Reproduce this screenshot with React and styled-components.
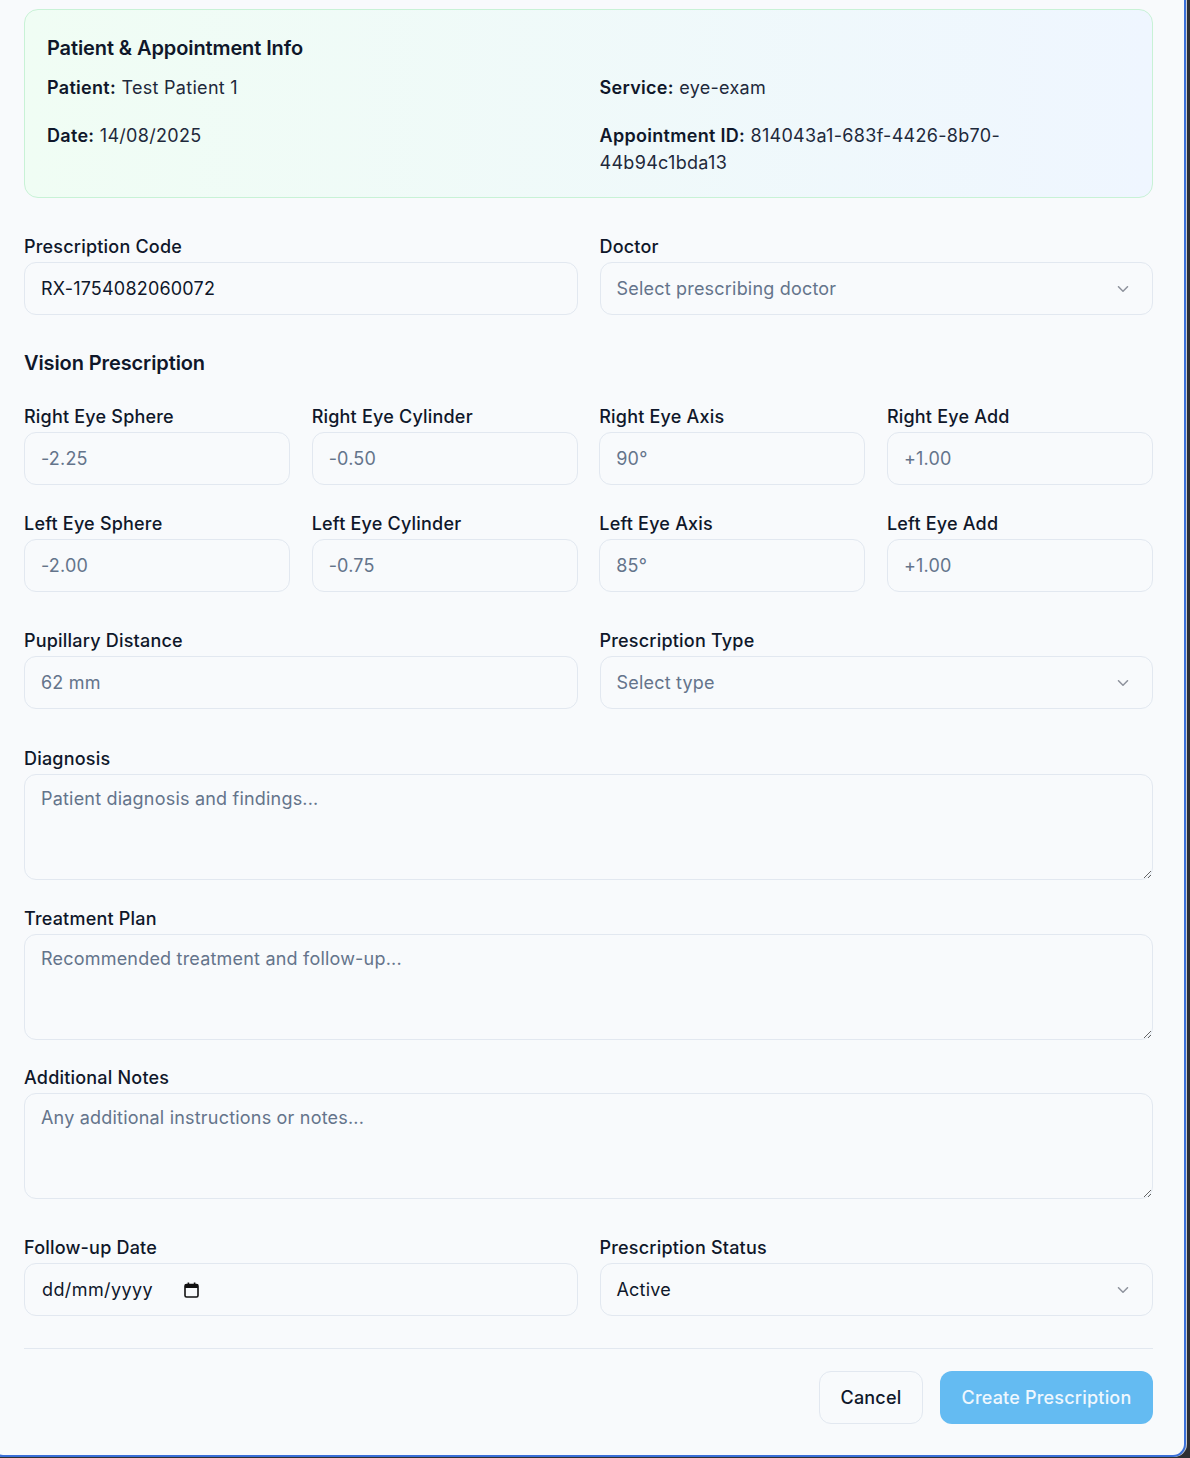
import React from 'react';
import styled, {createGlobalStyle} from 'styled-components';
import {ChevronDown} from 'lucide-react';

const GlobalStyle = createGlobalStyle`
  html, body {
    margin: 0;
    padding: 0;
    background: #2e2f33;
    overflow: hidden;
  }
  body {
    font-family: Inter, "Noto Sans", "Liberation Sans", sans-serif;
    color: #0f172a;
    letter-spacing: 0.2px;
    -webkit-font-smoothing: antialiased;
  }
  * { box-sizing: border-box; }
`

const eyeFields = [
  {label: 'Right Eye Sphere', placeholder: '-2.25'},
  {label: 'Right Eye Cylinder', placeholder: '-0.50'},
  {label: 'Right Eye Axis', placeholder: '90°'},
  {label: 'Right Eye Add', placeholder: '+1.00'},
  {label: 'Left Eye Sphere', placeholder: '-2.00'},
  {label: 'Left Eye Cylinder', placeholder: '-0.75'},
  {label: 'Left Eye Axis', placeholder: '85°'},
  {label: 'Left Eye Add', placeholder: '+1.00'},
];

const Select = ({value, placeholder}) => (
  <SelectTrigger muted={!value}>
    <span>{value || placeholder}</span>
    <ChevronDown size={18} strokeWidth={2} />
  </SelectTrigger>
);

const CalendarIcon = () => (
  <svg width="15" height="16" viewBox="0 0 15 16" aria-hidden="true">
    <rect x="1" y="2.5" width="13" height="12.5" rx="1.5" fill="none" stroke="#111" strokeWidth="1.6" />
    <rect x="1" y="2.5" width="13" height="3.5" fill="#111" />
    <rect x="3.6" y="0.5" width="1.6" height="3" fill="#111" />
    <rect x="9.8" y="0.5" width="1.6" height="3" fill="#111" />
  </svg>
);

export default function App() {
  return (
    <>
      <GlobalStyle />
      <Dialog>
        <InfoCard>
          <CardTitle>Patient &amp; Appointment Info</CardTitle>
          <InfoGrid>
            <p><b>Patient:</b> Test Patient 1</p>
            <p><b>Service:</b> eye-exam</p>
            <p><b>Date:</b> 14/08/2025</p>
            <p><b>Appointment ID:</b> 814043a1-683f-4426-8b70-44b94c1bda13</p>
          </InfoGrid>
        </InfoCard>

        <Columns gap={39}>
          <Field>
            <Label>Prescription Code</Label>
            <Input defaultValue="RX-1754082060072" />
          </Field>
          <Field>
            <Label>Doctor</Label>
            <Select placeholder="Select prescribing doctor" />
          </Field>
        </Columns>

        <SectionTitle>Vision Prescription</SectionTitle>
        <EyeGrid>
          {eyeFields.map(f => (
            <Field key={f.label}>
              <Label>{f.label}</Label>
              <Input placeholder={f.placeholder} />
            </Field>
          ))}
        </EyeGrid>

        <Columns gap={39}>
          <Field>
            <Label>Pupillary Distance</Label>
            <Input placeholder="62 mm" />
          </Field>
          <Field>
            <Label>Prescription Type</Label>
            <Select placeholder="Select type" />
          </Field>
        </Columns>

        <Field gap={40}>
          <Label>Diagnosis</Label>
          <TextArea placeholder="Patient diagnosis and findings..." />
        </Field>
        <Field gap={29}>
          <Label>Treatment Plan</Label>
          <TextArea placeholder="Recommended treatment and follow-up..." />
        </Field>
        <Field gap={28}>
          <Label>Additional Notes</Label>
          <TextArea placeholder="Any additional instructions or notes..." />
        </Field>

        <Columns gap={39}>
          <Field>
            <Label>Follow-up Date</Label>
            <DateBox>
              <span>dd/mm/yyyy</span>
              <CalendarIcon />
            </DateBox>
          </Field>
          <Field>
            <Label>Prescription Status</Label>
            <Select value="Active" />
          </Field>
        </Columns>

        <Footer>
          <CancelButton>Cancel</CancelButton>
          <SubmitButton disabled>Create Prescription</SubmitButton>
        </Footer>
      </Dialog>
    </>
  );
}

const Dialog = styled.div`
  margin-left: -10px;
  width: 1196px;
  padding: 9px 31px 31px 32px;
  background: #f8fafc;
  border: 2px solid #3a6fd8;
  border-top: none;
  border-radius: 0 0 13px 13px;
  box-shadow: 1px 0 0 #c9ccd3;
`

const InfoCard = styled.div`
  padding: 24px 22px 21px;
  border: 1px solid #c8f2d6;
  border-radius: 14px;
  background: linear-gradient(to right, #f0fdf4, #eff6ff);
`

const CardTitle = styled.h3`
  margin: 0 0 12px;
  font-size: 20px;
  line-height: 28px;
  font-weight: 600;
  letter-spacing: -0.1px;
  color: #0f172a;
`

const InfoGrid = styled.div`
  display: grid;
  grid-template-columns: 1fr 1fr;
  column-gap: 22px;
  row-gap: 21px;
  font-size: 18px;
  line-height: 27px;
  letter-spacing: 0.3px;
  color: #1e293b;

  p { margin: 0; max-width: 500px; }
  b { font-weight: 600; color: #0f172a; }
`

const Columns = styled.div`
  display: grid;
  grid-template-columns: 1fr 1fr;
  column-gap: 22px;
  margin-top: ${p => p.gap}px;
`

const EyeGrid = styled.div`
  display: grid;
  grid-template-columns: repeat(4, 1fr);
  column-gap: 21.5px;
  row-gap: 29px;
  margin-top: 30px;
`

const Field = styled.div`
  display: flex;
  flex-direction: column;
  gap: 5px;
  margin-top: ${p => p.gap || 0}px;
`

const Label = styled.label`
  font-size: 18px;
  line-height: 20px;
  font-weight: 500;
  color: #0f172a;
`

const SectionTitle = styled.h3`
  margin: 34px 0 0;
  font-size: 20px;
  line-height: 28px;
  font-weight: 600;
  letter-spacing: -0.1px;
  color: #0f172a;
`

const fieldBox = `
  width: 100%;
  border: 1px solid #e2e8f0;
  border-radius: 12px;
  background: #f8fafc;
  font-family: Inter, "Noto Sans", "Liberation Sans", sans-serif;
  font-size: 18px;
  letter-spacing: 0.2px;
  color: #0f172a;
  outline: none;
`

const Input = styled.input`
  ${fieldBox}
  height: 53px;
  padding: 0 16px;

  &::placeholder { color: #64748b; }
`

const TextArea = styled.textarea`
  ${fieldBox}
  display: block;
  height: 106px;
  padding: 11px 16px;
  line-height: 26px;
  resize: vertical;

  &::placeholder { color: #64748b; }
`

const SelectTrigger = styled.div`
  ${fieldBox}
  height: 53px;
  padding: 0 20px 0 16px;
  display: flex;
  align-items: center;
  justify-content: space-between;
  color: ${p => p.muted ? '#64748b' : '#0f172a'};

  svg { color: #0f172a; opacity: 0.45; }
`

const DateBox = styled.div`
  ${fieldBox}
  height: 53px;
  padding: 0 17px;
  display: flex;
  align-items: center;
  gap: 31px;
  letter-spacing: 0.4px;
`

const Footer = styled.div`
  display: flex;
  justify-content: flex-end;
  gap: 17px;
  margin-top: 32px;
  padding-top: 22px;
  border-top: 1px solid #e2e8f0;
`

const Button = styled.button`
  height: 53px;
  border-radius: 12px;
  font-family: Inter, "Noto Sans", "Liberation Sans", sans-serif;
  font-size: 18px;
  font-weight: 500;
  letter-spacing: 0.2px;
  cursor: pointer;
`

const CancelButton = styled(Button)`
  width: 104px;
  background: #f8fafc;
  border: 1px solid #e2e8f0;
  color: #0f172a;
`

const SubmitButton = styled(Button)`
  width: 213px;
  background: #64bbf2;
  border: none;
  color: #eef7fe;
`
